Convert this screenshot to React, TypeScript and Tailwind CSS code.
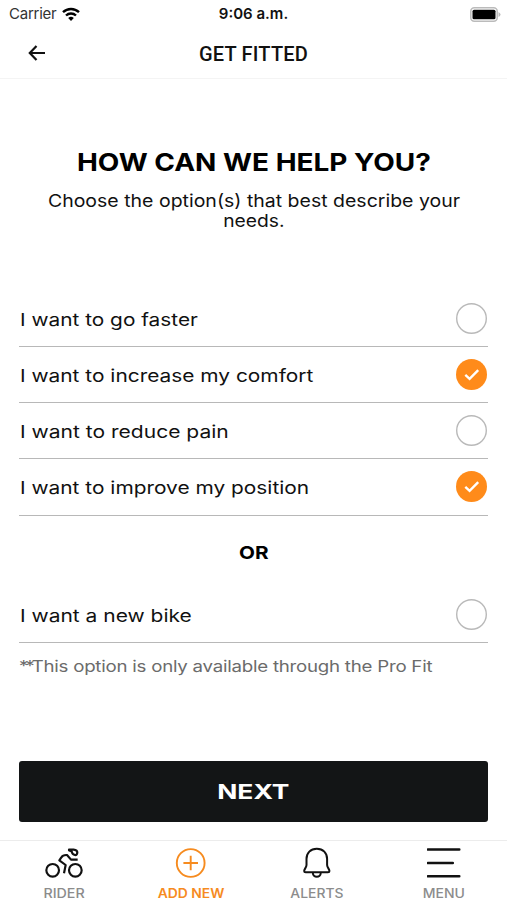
import { ReactNode, useState } from 'react';

interface StretchProps {
  className: string;
  children: ReactNode;
}

// Widened text, stands in for an extended grotesque
function Stretch({ className, children }: StretchProps) {
  return <span className={`inline-block whitespace-nowrap ${className}`}>{children}</span>;
}

interface Option {
  id: string;
  label: string;
  scale: string;
}

const goals: Option[] = [
  { id: 'faster', label: 'I want to go faster', scale: 'scale-x-[1.19]' },
  { id: 'comfort', label: 'I want to increase my comfort', scale: 'scale-x-[1.193]' },
  { id: 'pain', label: 'I want to reduce pain', scale: 'scale-x-[1.202]' },
  { id: 'position', label: 'I want to improve my position', scale: 'scale-x-[1.193]' },
];

const newBike: Option = { id: 'bike', label: 'I want a new bike', scale: 'scale-x-[1.198]' };

interface OptionRowProps {
  option: Option;
  checked: boolean;
  onToggle: () => void;
}

function OptionRow({ option, checked, onToggle }: OptionRowProps) {
  return (
    <button
      onClick={onToggle}
      className="flex h-[56.15px] w-full items-center justify-between border-b-[1.5px] border-[#b8b8b8] text-left"
    >
      <Stretch className={`ml-[0.7px] origin-left pt-[3px] text-[17.5px] ${option.scale}`}>{option.label}</Stretch>
      <svg className="mr-px size-[31px]" viewBox="0 0 31 31" fill="none">
        {checked ? (
          <>
            <circle cx="15.5" cy="15.5" r="15.5" fill="#ff8b1a" />
            <path d="M9.3 15.8l4.300 4 8.600-8.600" stroke="#fff" strokeWidth="2.4" />
          </>
        ) : (
          <circle cx="15.5" cy="15.5" r="14.8" stroke="#b9b9b9" strokeWidth="1.4" />
        )}
      </svg>
    </button>
  );
}

function StatusBar() {
  return (
    <div className="grid h-[27px] grid-cols-3 items-center pt-px text-[15px]">
      <div className="flex items-center gap-1.5 pl-[9px] text-[#333]">
        <span className="tracking-[-0.25px]">Carrier</span>
        <svg className="h-[14px] w-[18px]" viewBox="0 0 18 14" fill="none" stroke="#000" strokeWidth="2.4">
          <path d="M1 5.2a11.6 11.6 0 0 1 16 0" />
          <path d="M4 8.5a7.3 7.3 0 0 1 10 0" />
          <path d="M9 14L6.2 11a4 4 0 0 1 5.6 0z" fill="#000" stroke="none" />
        </svg>
      </div>
      <div className="text-center font-semibold">9:06 a.m.</div>
      <div className="flex justify-end pr-[6px]">
        <svg className="h-[15px] w-[31px]" viewBox="0 0 31 15">
          <rect x="0.8" y="0.8" width="26.4" height="13.4" rx="3.5" fill="#fff" stroke="#bbb" strokeWidth="1.5" />
          <rect x="2.5" y="2.8" width="23" height="9.4" rx="1.5" fill="#000" />
          <path d="M28.5 5v5q2-1 2-2.500t-2-2.500z" fill="#bbb" />
        </svg>
      </div>
    </div>
  );
}

function RiderIcon() {
  return (
    <svg
      className="h-8 w-10"
      viewBox="131 320 120 96"
      fill="none"
      stroke="#111"
      strokeWidth="6.5"
      strokeLinejoin="round"
    >
      <circle cx="157" cy="390" r="19" />
      <circle cx="225" cy="390" r="19" />
      <path d="M232 358h-20l-12-14q-12-1-17 7l-6 9 19 14-5 25" />
      <path d="M206 328h14q11 1 11 9-2 8-7 7-8-2-9-8-1-5-9-6z" />
    </svg>
  );
}

function AddIcon() {
  return (
    <svg className="h-8 w-8" viewBox="0 0 32 32" fill="none" stroke="#f68b1f" strokeWidth="1.9">
      <circle cx="15.700" cy="16" r="13.900" />
      <path d="M15.700 8.700v14.600M8.400 16h14.600" />
    </svg>
  );
}

function BellIcon() {
  return (
    <svg
      className="h-8 w-8"
      viewBox="0 0 32 32"
      fill="none"
      stroke="#111"
      strokeWidth="2"
      strokeLinejoin="round"
    >
      <path d="M15.800 1.800C9.500 1.800 5.500 6 5.500 12v6c0 2.500-2.300 4-2.300 5.800 0 1 .6 1.500 1.500 1.500h22.200c.9 0 1.500-.5 1.500-1.500 0-1.800-2.300-3.300-2.300-5.800v-6c0-6-4-10.200-10.300-10.200z" />
      <path d="M11.800 25.500c0 5.600 8 5.600 8 0" />
    </svg>
  );
}

function MenuIcon() {
  return (
    <svg className="h-8 w-[35px]" viewBox="0 0 35 32" fill="none" stroke="#111" strokeWidth="2.5" strokeLinecap="round">
      <path d="M0.800 2.500h31.500M0.800 16h25M0.800 29.300h31.500" />
    </svg>
  );
}

const tabs = [
  { label: 'RIDER', icon: <RiderIcon />, style: 'font-medium text-[#8c8c8c] scale-x-[1.14]' },
  { label: 'ADD NEW', icon: <AddIcon />, style: 'font-semibold text-[#f68b1f] scale-x-[1.11]' },
  { label: 'ALERTS', icon: <BellIcon />, style: 'font-medium text-[#8c8c8c] scale-x-[1.11]' },
  { label: 'MENU', icon: <MenuIcon />, style: 'font-medium text-[#8c8c8c] scale-x-[1.12]' },
];

export default function App() {
  const [selected, setSelected] = useState<string[]>(['comfort', 'position']);

  const toggle = (id: string) => {
    setSelected((prev) => (prev.includes(id) ? prev.filter((s) => s !== id) : [...prev, id]));
  };

  return (
    <div className="flex h-[900px] w-[507px] flex-col overflow-hidden bg-white font-['Inter',sans-serif] text-[#111]">
      <StatusBar />
      <header className="grid h-[52px] grid-cols-[60px_1fr_60px] items-center border-b border-[#f4f4f4]">
        <button className="pl-[28px]" aria-label="Back">
          <svg className="h-4 w-[18px]" viewBox="0 0 18 16" fill="none" stroke="#111" strokeWidth="2.2">
            <path d="M17 8H2M8.500 1L1.800 8l6.700 7" />
          </svg>
        </button>
        <h1 className="pt-[2px] text-center font-['Roboto',sans-serif] text-[20px] font-medium tracking-[0.2px]">
          GET FITTED
        </h1>
      </header>

      <main className="flex flex-1 flex-col px-[19px]">
        <div className="flex flex-col items-center pt-[69px] leading-[20px]">
          <h2 className="h-[30px] leading-[30px]">
            <Stretch className="scale-x-[1.165] text-[24px] font-bold text-black">HOW CAN WE HELP YOU?</Stretch>
          </h2>
          <p className="mt-[13px] flex flex-col items-center text-[17.5px]">
            <Stretch className="scale-x-[1.114]">Choose the option(s) that best describe your</Stretch>
            <Stretch className="scale-x-[1.1]">needs.</Stretch>
          </p>
        </div>

        <div className="mt-[60px]">
          {goals.map((goal) => (
            <OptionRow
              key={goal.id}
              option={goal}
              checked={selected.includes(goal.id)}
              onToggle={() => toggle(goal.id)}
            />
          ))}
        </div>

        <div className="flex h-[71px] items-center justify-center pt-[2px]">
          <Stretch className="scale-x-[1.15] text-[18px] font-bold text-black">OR</Stretch>
        </div>

        <OptionRow option={newBike} checked={selected.includes(newBike.id)} onToggle={() => toggle(newBike.id)} />
        <p className="mt-[12px] h-6 text-[15.500px] leading-6 text-[#6b6b6b]">
          <Stretch className="origin-left scale-x-[1.205]">
            <span className="tracking-[-2.500px]">**</span>
            <span className="tracking-[-0.2px]">This option is only available through the Pro Fit</span>
          </Stretch>
        </p>

        <button className="mt-auto mb-[18px] flex h-[61px] items-center justify-center rounded-[3px] bg-[#131516] pt-px text-white">
          <Stretch className="scale-x-[1.32] text-[20px] font-bold">NEXT</Stretch>
        </button>
      </main>

      <nav className="grid h-[60px] grid-cols-4 border-t border-[#ececec]">
        {tabs.map((tab) => (
          <button key={tab.label} className="flex flex-col items-center pt-[6px] pl-px">
            {tab.icon}
            <Stretch className={`mt-[6px] text-[12.500px] leading-[18px] ${tab.style}`}>{tab.label}</Stretch>
          </button>
        ))}
      </nav>
    </div>
  );
}
